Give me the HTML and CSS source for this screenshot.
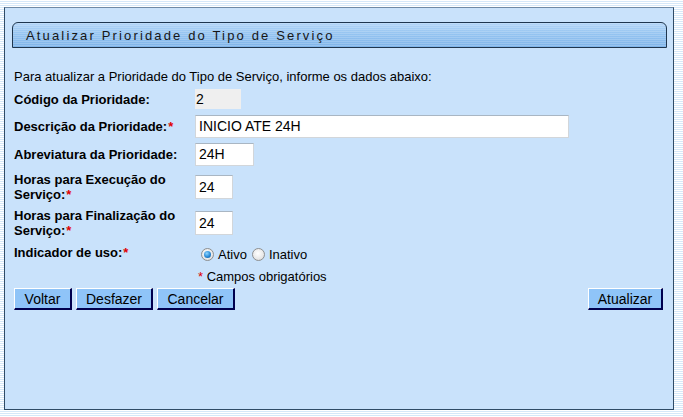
FILE: index.html
```html
<!DOCTYPE html>
<html lang="pt">
<head>
<meta charset="utf-8">
<title>Atualizar Prioridade do Tipo de Serviço</title>
<link rel="stylesheet" href="styles.css">
</head>
<body>
<div class="panel">
  <div class="header"><span class="title">Atualizar Prioridade do Tipo de Serviço</span></div>
  <div class="content">
    <p class="intro">Para atualizar a Prioridade do Tipo de Serviço, informe os dados abaixo:</p>
    <div class="row r1">
      <div class="label">Código da Prioridade:</div>
      <div class="field"><span class="readonly">2</span></div>
    </div>
    <div class="row r2">
      <div class="label">Descrição da Prioridade:<span class="req">*</span></div>
      <div class="field"><span class="input w-desc">INICIO ATE 24H</span></div>
    </div>
    <div class="row r3">
      <div class="label">Abreviatura da Prioridade:</div>
      <div class="field"><span class="input w-abr">24H</span></div>
    </div>
    <div class="row r4">
      <div class="label">Horas para Execução do<br>Serviço:<span class="req">*</span></div>
      <div class="field"><span class="input w-num">24</span></div>
    </div>
    <div class="row r5">
      <div class="label">Horas para Finalização do<br>Serviço:<span class="req">*</span></div>
      <div class="field"><span class="input w-num">24</span></div>
    </div>
    <div class="row r6">
      <div class="label">Indicador de uso:<span class="req">*</span></div>
      <div class="field radios">
        <span class="radio checked"></span><span class="rlabel">Ativo</span>
        <span class="radio"></span><span class="rlabel">Inativo</span>
      </div>
    </div>
    <div class="row r7">
      <div class="label"></div>
      <div class="field note"><span class="req">*</span> Campos obrigatórios</div>
    </div>
    <div class="buttons">
      <div class="left">
        <span class="btn b-voltar">Voltar</span>
        <span class="btn b-desfazer">Desfazer</span>
        <span class="btn b-cancelar">Cancelar</span>
      </div>
      <span class="btn b-atualizar">Atualizar</span>
    </div>
  </div>
</div>
</body>
</html>
```

FILE: styles.css
```css
html, body {
  margin: 0;
  padding: 0;
}
body {
  width: 683px;
  height: 417px;
  overflow: hidden;
  font-family: "Liberation Sans", Arial, sans-serif;
  font-size: 13px;
  color: #000;
  background: repeating-linear-gradient(to bottom, #ffffff 0 1px, #d5e8f9 1px 2px);
}
.panel {
  box-sizing: border-box;
  margin: 7px 0 0 4px;
  width: 670px;
  height: 403px;
  background: #c9e2fb;
  border: 1px solid #2f4b66;
  border-top-color: #6f8aa6;
}
.header {
  box-sizing: border-box;
  margin: 14px 6px 0 7px;
  height: 26px;
  border: 1px solid #1f364e;
  border-radius: 6px 6px 0 0;
  background:
    repeating-linear-gradient(to bottom, rgba(255,255,255,0.18) 0 1px, rgba(255,255,255,0) 1px 2px),
    linear-gradient(to bottom, #b3d5f7 0%, #95c4f1 45%, #7fb5ea 100%);
  display: flex;
  align-items: center;
  padding-left: 13px;
}
.title {
  font-size: 13px;
  letter-spacing: 2.15px;
  color: #161616;
}
.content {
  padding: 0 10px 0 9px;
}
.intro {
  margin: 21px 0 0 0;
  height: 16px;
  line-height: 16px;
}
.row {
  display: flex;
  align-items: center;
}
.label {
  width: 181px;
  flex: none;
  font-weight: bold;
  line-height: 15px;
  white-space: nowrap;
}
.req {
  color: #e00000;
  font-weight: normal;
}
.label .req {
  font-weight: bold;
  margin-left: 1px;
}
.r1 { height: 28px; }
.r2 { height: 26px; }
.r3 { height: 30px; }
.r4 { height: 35px; }
.r5 { height: 37px; }
.r6 { height: 25px; align-items: flex-start; padding-top: 4px; box-sizing: border-box; }
.r7 { height: 20px; }
.readonly {
  display: block;
  box-sizing: border-box;
  width: 46px;
  height: 20px;
  background: #efefef;
  font-size: 14px;
  line-height: 20px;
  padding-left: 1px;
}
.input {
  display: block;
  box-sizing: border-box;
  background: #fff;
  border: 1px solid #d2d6da;
  border-top-color: #a9b6c3;
  font-size: 14px;
  padding-left: 3px;
}
.w-desc { width: 374px; height: 23px; line-height: 21px; }
.w-abr { width: 59px; height: 23px; line-height: 21px; }
.w-num { width: 38px; height: 24px; line-height: 22px; }
.radios {
  display: flex;
  align-items: center;
  padding-top: 2px;
  padding-left: 6px;
}
.radio {
  box-sizing: border-box;
  width: 13px;
  height: 13px;
  border-radius: 50%;
  border: 1px solid #8e8f8f;
  background: radial-gradient(circle at 45% 40%, #ffffff 0%, #e8e8e8 60%, #cfcfcf 100%);
  position: relative;
}
.radio.checked::after {
  content: "";
  position: absolute;
  left: 2px;
  top: 2px;
  width: 7px;
  height: 7px;
  border-radius: 50%;
  background: radial-gradient(circle at 40% 35%, #8fd6ff 0%, #2a8ad6 55%, #0f4f8e 100%);
}
.rlabel {
  margin: 0 5px 0 4px;
  font-size: 13px;
}
.note {
  padding-left: 3px;
}
.buttons {
  margin-top: 2px;
  display: flex;
  justify-content: space-between;
}
.left {
  display: flex;
  gap: 4px;
}
.btn {
  box-sizing: border-box;
  display: inline-flex;
  align-items: center;
  justify-content: center;
  height: 22px;
  font-size: 14px;
  background: #8fc4f8;
  border-style: solid;
  border-width: 1px 2px 2px 1px;
  border-color: #ffffff #00004e #00004e #ffffff;
  color: #000;
  padding: 0;
}
.b-voltar { width: 58px; }
.b-desfazer { width: 77px; }
.b-cancelar { width: 78px; }
.b-atualizar { width: 75px; }
```
